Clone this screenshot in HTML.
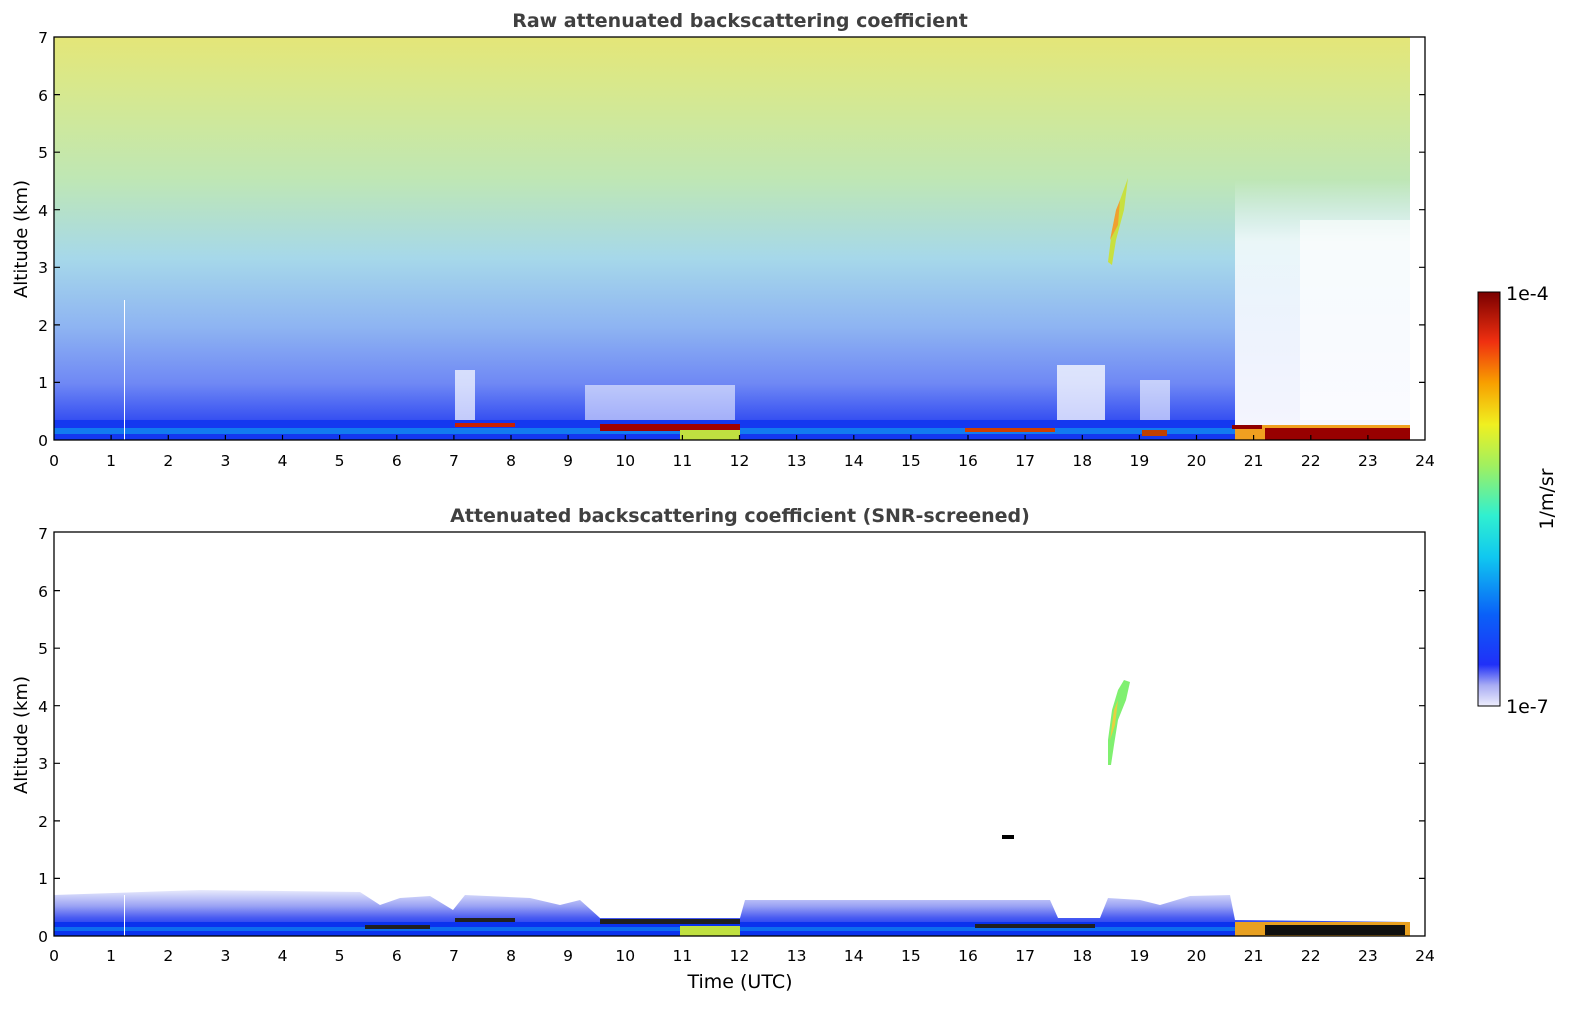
<!DOCTYPE html>
<html><head><meta charset="utf-8"><style>
html,body{margin:0;padding:0;background:#fff;}
svg{display:block;font-family:"DejaVu Sans","Liberation Sans",sans-serif;}
</style></head><body>
<svg width="1595" height="1020" viewBox="0 0 1595 1020" xmlns="http://www.w3.org/2000/svg">
<defs>
<linearGradient id="topg" x1="0" y1="0" x2="0" y2="1">
<stop offset="0" stop-color="#e4e678"/>
<stop offset="0.12" stop-color="#d8e88c"/>
<stop offset="0.35" stop-color="#bfe7b4"/>
<stop offset="0.55" stop-color="#a6d8ea"/>
<stop offset="0.72" stop-color="#8eb4f2"/>
<stop offset="0.86" stop-color="#6f88f4"/>
<stop offset="0.95" stop-color="#3650f2"/>
<stop offset="1" stop-color="#1436f0"/>
</linearGradient>
<linearGradient id="whiteR" x1="0" y1="0" x2="0" y2="1">
<stop offset="0" stop-color="#fff" stop-opacity="0"/>
<stop offset="0.25" stop-color="#fff" stop-opacity="0.75"/>
<stop offset="1" stop-color="#fff" stop-opacity="0.95"/>
</linearGradient>
<linearGradient id="botband" x1="0" y1="0" x2="0" y2="1">
<stop offset="0" stop-color="#e8eafc"/>
<stop offset="0.35" stop-color="#9aa2f4"/>
<stop offset="0.6" stop-color="#4a5cf2"/>
<stop offset="0.8" stop-color="#1a3af0"/>
<stop offset="1" stop-color="#0a30e8"/>
</linearGradient>
<linearGradient id="cb" x1="0" y1="1" x2="0" y2="0">
<stop offset="0" stop-color="#eeeefc"/>
<stop offset="0.05" stop-color="#a8acf4"/>
<stop offset="0.1" stop-color="#2030f8"/>
<stop offset="0.22" stop-color="#0a60f8"/>
<stop offset="0.36" stop-color="#10c8f0"/>
<stop offset="0.46" stop-color="#30f0d0"/>
<stop offset="0.58" stop-color="#a0f060"/>
<stop offset="0.68" stop-color="#f0f020"/>
<stop offset="0.78" stop-color="#f8a000"/>
<stop offset="0.88" stop-color="#f03010"/>
<stop offset="1" stop-color="#7a0000"/>
</linearGradient>
</defs>

<!-- TOP PLOT -->
<text x="740" y="27" text-anchor="middle" font-size="19" font-weight="bold" fill="#404040">Raw attenuated backscattering coefficient</text>
<rect x="54" y="37" width="1356" height="403" fill="url(#topg)"/>
<!-- white areas -->
<rect x="1235" y="180" width="175" height="245" fill="url(#whiteR)"/>
<rect x="1300" y="220" width="110" height="200" fill="#fff" opacity="0.6"/>
<rect x="455" y="370" width="20" height="50" fill="#fff" opacity="0.7"/>
<rect x="1057" y="365" width="48" height="60" fill="#fff" opacity="0.75"/>
<rect x="585" y="385" width="150" height="38" fill="#fff" opacity="0.55"/>
<rect x="1140" y="380" width="30" height="40" fill="#fff" opacity="0.6"/>
<!-- ground band -->
<rect x="54" y="420" width="1181" height="20" fill="#1438f0"/>
<rect x="54" y="428" width="1181" height="6" fill="#10a8f0" opacity="0.6"/>
<rect x="1235" y="425" width="175" height="15" fill="#f0a020"/>
<rect x="1265" y="428" width="145" height="12" fill="#980000"/>
<rect x="600" y="424" width="140" height="7" fill="#a00000"/>
<rect x="680" y="430" width="60" height="10" fill="#c0e040"/>
<rect x="455" y="423" width="60" height="4" fill="#c82000"/>
<rect x="965" y="428" width="90" height="4" fill="#d04000"/>
<rect x="1142" y="430" width="25" height="6" fill="#c04000"/>
<rect x="1232" y="425" width="30" height="4" fill="#900000"/>
<!-- plume -->
<path d="M1108,262 L1112,230 L1120,200 L1128,178 L1124,210 L1116,240 L1112,265 Z" fill="#c8e040"/>
<path d="M1110,240 L1116,210 L1120,200 L1118,225 Z" fill="#f0a030"/>
<rect x="124" y="300" width="1" height="140" fill="#fff"/>
<rect x="54" y="37" width="1371" height="403" fill="none" stroke="#000" stroke-width="1.3"/>

<!-- ticks top -->
<g stroke="#000" stroke-width="1.2">
<path d="M111.1,440v-5M168.3,440v-5M225.4,440v-5M282.5,440v-5M339.6,440v-5M396.8,440v-5M453.9,440v-5M511,440v-5M568.1,440v-5M625.3,440v-5M682.4,440v-5M739.5,440v-5M796.6,440v-5M853.8,440v-5M910.9,440v-5M968,440v-5M1025.1,440v-5M1082.3,440v-5M1139.4,440v-5M1196.5,440v-5M1253.6,440v-5M1310.8,440v-5M1367.9,440v-5"/>
<path d="M54,382.4h6M54,324.9h6M54,267.3h6M54,209.7h6M54,152.2h6M54,94.6h6M1425,382.4h-6M1425,324.9h-6M1425,267.3h-6M1425,209.7h-6M1425,152.2h-6M1425,94.6h-6"/>
<path d="M111.1,936v-5M168.3,936v-5M225.4,936v-5M282.5,936v-5M339.6,936v-5M396.8,936v-5M453.9,936v-5M511,936v-5M568.1,936v-5M625.3,936v-5M682.4,936v-5M739.5,936v-5M796.6,936v-5M853.8,936v-5M910.9,936v-5M968,936v-5M1025.1,936v-5M1082.3,936v-5M1139.4,936v-5M1196.5,936v-5M1253.6,936v-5M1310.8,936v-5M1367.9,936v-5"/>
<path d="M54,878.4h6M54,820.9h6M54,763.3h6M54,705.7h6M54,648.2h6M54,590.6h6M1425,878.4h-6M1425,820.9h-6M1425,763.3h-6M1425,705.7h-6M1425,648.2h-6M1425,590.6h-6"/>
</g>
<g font-size="15.5" fill="#000" text-anchor="middle">
<text x="54" y="466">0</text><text x="111.1" y="466">1</text><text x="168.3" y="466">2</text><text x="225.4" y="466">3</text><text x="282.5" y="466">4</text><text x="339.6" y="466">5</text><text x="396.8" y="466">6</text><text x="453.9" y="466">7</text><text x="511" y="466">8</text><text x="568.1" y="466">9</text><text x="625.3" y="466">10</text><text x="682.4" y="466">11</text><text x="739.5" y="466">12</text><text x="796.6" y="466">13</text><text x="853.8" y="466">14</text><text x="910.9" y="466">15</text><text x="968" y="466">16</text><text x="1025.1" y="466">17</text><text x="1082.3" y="466">18</text><text x="1139.4" y="466">19</text><text x="1196.5" y="466">20</text><text x="1253.6" y="466">21</text><text x="1310.8" y="466">22</text><text x="1367.9" y="466">23</text><text x="1425" y="466">24</text>
<text x="54" y="961">0</text><text x="111.1" y="961">1</text><text x="168.3" y="961">2</text><text x="225.4" y="961">3</text><text x="282.5" y="961">4</text><text x="339.6" y="961">5</text><text x="396.8" y="961">6</text><text x="453.9" y="961">7</text><text x="511" y="961">8</text><text x="568.1" y="961">9</text><text x="625.3" y="961">10</text><text x="682.4" y="961">11</text><text x="739.5" y="961">12</text><text x="796.6" y="961">13</text><text x="853.8" y="961">14</text><text x="910.9" y="961">15</text><text x="968" y="961">16</text><text x="1025.1" y="961">17</text><text x="1082.3" y="961">18</text><text x="1139.4" y="961">19</text><text x="1196.5" y="961">20</text><text x="1253.6" y="961">21</text><text x="1310.8" y="961">22</text><text x="1367.9" y="961">23</text><text x="1425" y="961">24</text>
</g>
<g font-size="15.5" fill="#000" text-anchor="end">
<text x="48" y="446">0</text><text x="48" y="388">1</text><text x="48" y="331">2</text><text x="48" y="273">3</text><text x="48" y="216">4</text><text x="48" y="158">5</text><text x="48" y="101">6</text><text x="48" y="43">7</text>
<text x="48" y="942">0</text><text x="48" y="884">1</text><text x="48" y="827">2</text><text x="48" y="769">3</text><text x="48" y="712">4</text><text x="48" y="654">5</text><text x="48" y="597">6</text><text x="48" y="539">7</text>
</g>
<text transform="translate(27,239) rotate(-90)" text-anchor="middle" font-size="18">Altitude (km)</text>
<text transform="translate(27,735) rotate(-90)" text-anchor="middle" font-size="18">Altitude (km)</text>
<text x="740" y="988" text-anchor="middle" font-size="19">Time (UTC)</text>

<!-- BOTTOM PLOT -->
<text x="740" y="522" text-anchor="middle" font-size="19" font-weight="bold" fill="#404040">Attenuated backscattering coefficient (SNR-screened)</text>
<path d="M54,895 L200,890 L360,892 L380,905 L400,898 L430,896 L453,910 L465,895 L530,898 L560,905 L580,900 L600,918 L740,918 L745,900 L1050,900 L1058,918 L1100,918 L1108,898 L1140,900 L1160,905 L1190,896 L1230,895 L1235,920 L1410,922 L1410,936 L54,936 Z" fill="url(#botband)"/>
<rect x="54" y="922" width="1356" height="14" fill="#0a32ee"/>
<rect x="54" y="927" width="1181" height="4" fill="#10a8f0" opacity="0.5"/>
<rect x="1235" y="922" width="175" height="14" fill="#e8a020"/>
<rect x="1265" y="925" width="140" height="10" fill="#101010"/>
<rect x="600" y="919" width="140" height="5" fill="#202020"/>
<rect x="680" y="926" width="60" height="10" fill="#c0e040"/>
<rect x="455" y="918" width="60" height="4" fill="#202020"/>
<rect x="365" y="925" width="65" height="4" fill="#202020"/>
<rect x="975" y="924" width="120" height="4" fill="#202020"/>
<rect x="1002" y="835" width="12" height="4" fill="#000"/>
<path d="M1108,765 L1108,740 L1112,710 L1118,690 L1124,680 L1130,682 L1126,700 L1118,720 L1114,745 L1111,765 Z" fill="#80f070"/>
<path d="M1110,740 L1114,710 L1118,700 L1115,725 Z" fill="#e8d040"/>
<rect x="124" y="895" width="1" height="41" fill="#fff"/>
<rect x="54" y="532" width="1371" height="404" fill="none" stroke="#000" stroke-width="1.3"/>

<!-- COLORBAR -->
<rect x="1478" y="292" width="22" height="414" fill="url(#cb)" stroke="#000" stroke-width="1"/>
<text x="1506" y="300" font-size="19">1e-4</text>
<text x="1506" y="713" font-size="19">1e-7</text>
<text transform="translate(1553,499) rotate(-90)" text-anchor="middle" font-size="19">1/m/sr</text>
</svg>
</body></html>
